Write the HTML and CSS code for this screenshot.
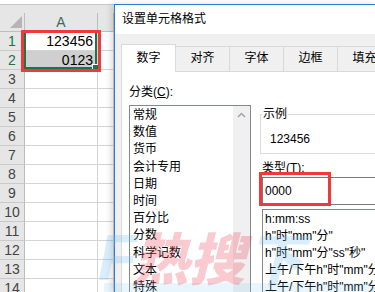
FILE: index.html
```html
<!DOCTYPE html>
<html>
<head>
<meta charset="utf-8">
<link rel="stylesheet" href="styles.css">
</head>
<body>
<div class="screen">
  <div class="sheet">
    <div class="fbar"></div>
    <div class="colhead">
      <div class="corner"><span class="tri"></span></div>
      <div class="ch a">A</div>
      <div class="ch b"></div>
    </div>
    <div class="row"><div class="rh on">1</div><div class="cell a">123456</div><div class="cell b"></div></div>
    <div class="row"><div class="rh on">2</div><div class="cell a sel">0123</div><div class="cell b"></div></div>
    <div class="row"><div class="rh">3</div><div class="cell a"></div><div class="cell b"></div></div>
    <div class="row"><div class="rh">4</div><div class="cell a"></div><div class="cell b"></div></div>
    <div class="row"><div class="rh">5</div><div class="cell a"></div><div class="cell b"></div></div>
    <div class="row"><div class="rh">6</div><div class="cell a"></div><div class="cell b"></div></div>
    <div class="row"><div class="rh">7</div><div class="cell a"></div><div class="cell b"></div></div>
    <div class="row"><div class="rh">8</div><div class="cell a"></div><div class="cell b"></div></div>
    <div class="row"><div class="rh">9</div><div class="cell a"></div><div class="cell b"></div></div>
    <div class="row"><div class="rh">10</div><div class="cell a"></div><div class="cell b"></div></div>
    <div class="row"><div class="rh">11</div><div class="cell a"></div><div class="cell b"></div></div>
    <div class="row"><div class="rh">12</div><div class="cell a"></div><div class="cell b"></div></div>
    <div class="row"><div class="rh">13</div><div class="cell a"></div><div class="cell b"></div></div>
    <div class="row"><div class="rh">14</div><div class="cell a"></div><div class="cell b"></div></div>
  </div>

  <div class="dialog">
    <div class="title">设置单元格格式</div>
    <div class="body">
      <div class="tabs">
        <div class="tab on">数字</div>
        <div class="tab">对齐</div>
        <div class="tab">字体</div>
        <div class="tab">边框</div>
        <div class="tab">填充</div>
      </div>
      <div class="panel">
        <div class="left">
          <div class="lbl">分类(<span class="u">C</span>):</div>
          <div class="catlist">
            <div class="items">
              <div>常规</div>
              <div>数值</div>
              <div>货币</div>
              <div>会计专用</div>
              <div>日期</div>
              <div>时间</div>
              <div>百分比</div>
              <div>分数</div>
              <div>科学记数</div>
              <div>文本</div>
              <div>特殊</div>
            </div>
            <div class="scroll">
              <svg width="9" height="6" viewBox="0 0 9 6"><path d="M1 5 L4.5 1.5 L8 5" fill="none" stroke="#a3a3a3" stroke-width="1.5"/></svg>
            </div>
          </div>
        </div>
        <div class="right">
          <fieldset class="group">
            <legend>示例</legend>
            <div class="sample">123456</div>
          </fieldset>
          <div class="lbl2">类型(<span class="u">T</span>):</div>
          <div class="input">0000</div>
          <div class="fmtlist">
            <div>h:mm:ss</div>
            <div>h"时"mm"分"</div>
            <div>h"时"mm"分"ss"秒"</div>
            <div>上午/下午h"时"mm"分"</div>
            <div>上午/下午h"时"mm"分"ss"秒"</div>
          </div>
        </div>
      </div>
    </div>
  </div>

  <div class="selbox"><span class="handle"></span></div>
  <div class="redbox box1"></div>
  <div class="redbox box2"></div>
  <div class="wmband"></div>
  <div class="wm"><span class="f">F</span><span class="hot">热搜</span><span class="f2">下</span></div>
</div>
</body>
</html>
```
FILE: styles.css
```css
html, body {
  margin: 0;
  padding: 0;
}
body {
  width: 375px;
  height: 292px;
  overflow: hidden;
  background: #fff;
  font-family: "Liberation Sans", "Noto Sans CJK SC", sans-serif;
  color: #000;
}
.screen {
  position: relative;
  display: flex;
  width: 375px;
  height: 292px;
  overflow: hidden;
}

/* spreadsheet */
.sheet {
  width: 114px;
  flex: none;
}
.fbar {
  height: 4px;
  background: #fff;
  border-bottom: 1px solid #c6c6c6;
}
.colhead {
  display: flex;
  height: 27px;
  box-sizing: border-box;
  padding-top: 8px;
  background: #e6e6e6;
  border-bottom: 1px solid #bdbdbd;
}
.corner {
  width: 25px;
  height: 18px;
  box-sizing: border-box;
  border-right: 1px solid #bdbdbd;
  display: flex;
  align-items: flex-end;
  justify-content: flex-end;
  padding: 0 2px 3px 0;
}
.tri {
  width: 0;
  height: 0;
  border-left: 12px solid transparent;
  border-bottom: 12px solid #b5b5b5;
}
.ch {
  height: 18px;
  box-sizing: border-box;
  border-right: 1px solid #bdbdbd;
  font-size: 14px;
  line-height: 18px;
  text-align: center;
  color: #444;
}
.ch.a {
  width: 73px;
  color: #3c6e55;
}
.ch.b {
  flex: 1;
}
.row {
  display: flex;
  height: 19px;
}
.rh {
  width: 25px;
  flex: none;
  box-sizing: border-box;
  background: #e6e6e6;
  border-right: 1px solid #bdbdbd;
  border-bottom: 1px solid #cacaca;
  text-align: center;
  font-size: 14px;
  line-height: 18px;
  color: #444;
}
.rh.on {
  color: #217346;
}
.cell {
  box-sizing: border-box;
  border-right: 1px solid #d4d4d4;
  border-bottom: 1px solid #d4d4d4;
  font-size: 14px;
  line-height: 18px;
}
.cell.a {
  width: 73px;
  flex: none;
  text-align: right;
  padding-right: 4px;
}
.cell.b {
  flex: 1;
}
.cell.sel {
  background: #cfcfcf;
}

/* dialog */
.dialog {
  flex: 1;
  min-width: 0;
  margin-top: 4px;
  border-left: 1px solid #2b7ad6;
  border-top: 1px solid #2b7ad6;
  background: #f0f0f0;
  display: flex;
  flex-direction: column;
  box-shadow: -3px 0 6px rgba(0, 0, 0, 0.14);
  font-size: 12px;
}
.title {
  height: 29px;
  flex: none;
  background: #fff;
  padding-left: 7px;
  line-height: 29px;
  font-size: 12px;
}
.body {
  flex: 1;
  padding: 10px 0 0 6px;
  display: flex;
  flex-direction: column;
  min-height: 0;
}
.tabs {
  display: flex;
  align-items: flex-end;
  height: 28px;
  flex: none;
  margin-bottom: -1px;
  position: relative;
  z-index: 1;
}
.tab {
  width: 55px;
  flex: none;
  height: 25px;
  box-sizing: border-box;
  margin-bottom: 1px;
  margin-left: -1px;
  border: 1px solid #d9d9d9;
  border-bottom: none;
  background: #f0f0f0;
  text-align: center;
  line-height: 23px;
}
.tab.on {
  height: 28px;
  margin-bottom: 0;
  margin-left: 0;
  background: #fff;
  line-height: 27px;
}
.panel {
  flex: 1;
  display: flex;
  align-items: flex-start;
  background: #fff;
  border-top: 1px solid #d9d9d9;
  border-left: 1px solid #d9d9d9;
  padding: 12px 0 0 7px;
  min-width: 0;
}
.left {
  width: 122px;
  flex: none;
  display: flex;
  flex-direction: column;
}
.lbl {
  line-height: 17px;
  height: 17px;
}
.u {
  text-decoration: underline;
}
.catlist {
  margin-top: 4px;
  height: 200px;
  box-sizing: border-box;
  border: 1px solid #828790;
  display: flex;
}
.items {
  flex: 1;
  padding: 1px 0 0 3px;
  line-height: 17.2px;
}
.scroll {
  width: 17px;
  flex: none;
  background: #f0f0f0;
  display: flex;
  justify-content: center;
  align-items: flex-start;
  padding-top: 6px;
  box-sizing: border-box;
}
.right {
  flex: 1;
  min-width: 0;
  margin-left: 9px;
  display: flex;
  flex-direction: column;
}
.group {
  margin: 23px 0 0 0;
  width: 140px;
  box-sizing: border-box;
  border: 1px solid #dcdcdc;
  padding: 10px 0 5px 9px;
  min-width: 0;
}
.group legend {
  padding: 0 1px;
  margin-left: -8px;
  line-height: 14px;
  font-size: 12px;
}
.sample {
  line-height: 17px;
}
.lbl2 {
  margin: 6px 0 0 2px;
  line-height: 17px;
}
.input {
  margin-left: 2px;
  width: 140px;
  height: 28px;
  box-sizing: border-box;
  border: 1px solid #7a7a7a;
  padding-left: 2px;
  line-height: 26px;
}
.fmtlist {
  margin: 4px 0 0 2px;
  width: 140px;
  height: 120px;
  box-sizing: border-box;
  border: 1px solid #828790;
  padding: 1px 0 0 2px;
  line-height: 17px;
  white-space: nowrap;
  overflow: hidden;
}

/* overlays */
.selbox {
  position: absolute;
  left: 24px;
  top: 31px;
  width: 73px;
  height: 38px;
  box-sizing: border-box;
  border: 2px solid #217346;
}
.handle {
  position: absolute;
  right: -4px;
  bottom: -4px;
  width: 5px;
  height: 5px;
  background: #217346;
  border: 1px solid #fff;
}
.redbox {
  position: absolute;
  box-sizing: border-box;
  border: 3px solid #f0393a;
}
.box1 {
  left: 21px;
  top: 30px;
  width: 80px;
  height: 42px;
}
.box2 {
  left: 259px;
  top: 172px;
  width: 72px;
  height: 34px;
}
.wmband {
  position: absolute;
  left: 104px;
  top: 283px;
  width: 271px;
  height: 9px;
  background: rgba(120, 190, 235, 0.16);
}
.wm {
  position: absolute;
  left: 98px;
  top: 220px;
  font-family: "Noto Sans CJK SC", sans-serif;
  font-weight: 900;
  font-style: italic;
  font-size: 56px;
  line-height: 72px;
  white-space: nowrap;
  pointer-events: none;
}
.wm .f {
  font-family: "Liberation Sans", sans-serif;
  font-size: 64px;
  color: rgba(110, 185, 235, 0.26);
  margin-right: -4px;
}
.wm .hot {
  color: rgba(232, 70, 85, 0.28);
}
.wm .f2 {
  color: rgba(110, 185, 235, 0.26);
  margin-left: 2px;
}
```
